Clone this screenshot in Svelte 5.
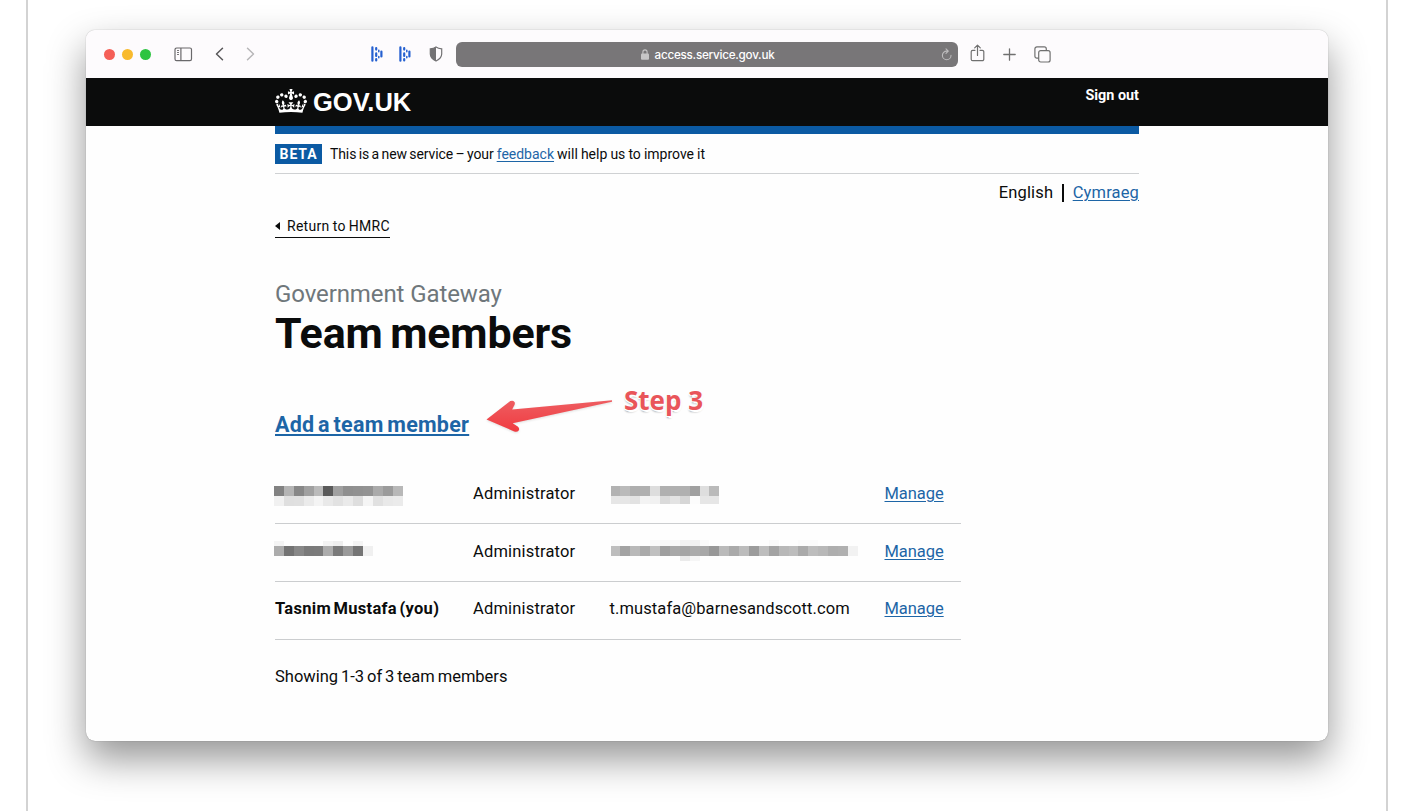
<script>
  const mosaics = {
    name1: {
      top: 6, tall: [10, 10],
      rows: [
        ['#828282', '#b4b4b4', '#878787', '#a0a0a0', '#bababa', '#5a5a5a', '#a0a0a0', '#8f8f8f', '#919191', '#939393', '#aaaaaa', '#9b9b9b', '#b8b8b8'],
        ['#f1f1f1', '#dfdfdf', '#e0e0e0', '#ebebeb', '#f4f4f4', '#e9e9e9', '#e2e2e2', '#eaeaea', '#dedede', '#f5f5f5', '#e1e1e1', '#e9e9e9', '#ebebeb']
      ]
    },
    mail1: {
      top: 3.5, tall: [10, 7.5],
      rows: [
        ['#b2b2b2', '#bababa', '#aeaeae', '#b0b0b0', '#dddddd', '#b0b0b0', '#b0b0b0', '#b0b0b0', '#a0a0a0', '#dedede', '#bababa'],
        ['#e6e6e6', '#e6e6e6', '#e2e2e2', '#f3f3f3', '#f1f1f1', '#dadada', '#e3e3e3', '#d6d6d6', '#fcfcfc', '#e6e6e6', '#e6e6e6']
      ]
    },
    name2: {
      top: -5.5, tall: [4.5, 10],
      rows: [
        ['#f4f4f4', '#fefefe', '#fefefe', '#fefefe', '#fefefe', '#f3f3f3', '#eeeeee', '#fefefe', '#f4f4f4', '#fefefe'],
        ['#acacac', '#737373', '#888888', '#7a7a7a', '#7b7b7b', '#acacac', '#7a7a7a', '#9a9a9a', '#757575', '#f0f0f0']
      ]
    },
    mail2: {
      top: -2, tall: [6, 10, 5],
      rows: [
        ['#fafafa', '#fefefe', '#fefefe', '#fefefe', '#fafafa', '#f8f8f8', '#f8f8f8', '#f1f1f1', '#f1f1f1', '#fafafa', '#fefefe', '#fefefe', '#fefefe', '#fefefe', '#fefefe', '#fefefe', '#f9f9f9', '#fefefe', '#fefefe', '#fbfbfb', '#fbfbfb', '#fefefe', '#fefefe', '#fefefe', '#fefefe'],
        ['#bdbdbd', '#a3a3a3', '#b9b9b9', '#aaaaaa', '#c0c0c0', '#9f9f9f', '#a8a8a8', '#a5a5a5', '#ababab', '#a8a8a8', '#989898', '#bababa', '#aaaaaa', '#bcbcbc', '#9c9c9c', '#bdbdbd', '#a3a3a3', '#b8b8b8', '#bdbdbd', '#aaaaaa', '#bdbdbd', '#b8b8b8', '#aeaeae', '#b0b0b0', '#f2f2f2'],
        ['#fefefe', '#fefefe', '#fefefe', '#fefefe', '#fefefe', '#fefefe', '#fefefe', '#ebebeb', '#f6f6f6', '#fefefe', '#fefefe', '#fefefe', '#fefefe', '#fefefe', '#fefefe', '#fefefe', '#fefefe', '#fefefe', '#fefefe', '#fefefe', '#fefefe', '#fefefe', '#fefefe', '#fefefe', '#fefefe']
      ]
    }
  };
  const members = [
    { nameMosaic: 'name1', mailMosaic: 'mail1' },
    { nameMosaic: 'name2', mailMosaic: 'mail2' },
    { name: 'Tasnim Mustafa (you)', mail: 't.mustafa@barnesandscott.com' }
  ];
</script>

{#snippet mosaic(m)}
  <div class="mosaic" style:margin-top="{m.top}px">
    {#each m.rows as row, i}
      <div class="pixels" style:height="{m.tall[i]}px">
        {#each row as shade}<i style:background={shade}></i>{/each}
      </div>
    {/each}
  </div>
{/snippet}

{#snippet bars()}
  <svg class="bars" width="12" height="16" viewBox="0 0 12 16" stroke="#2560d0" stroke-width="2.2" stroke-linecap="round">
    <path d="M1.400 1.300v13.400M5.200 2v1.600M5.200 7.400v2.600M5.200 13.200v1.200M10.400 5.600v4.800" /><path d="M7.800 4.200v1.600M7.800 10.400v1.400" stroke-width="1.500" />
  </svg>
{/snippet}

<div class="frame">
  <div class="window">
    <div class="toolbar">
      <div class="lights"><i class="red"></i><i class="amber"></i><i class="green"></i></div>
      <svg class="side" width="19" height="15" viewBox="0 0 19 15" fill="none" stroke="#6a696b" stroke-width="1.2">
        <rect x="1" y="1" width="16.5" height="12.6" rx="1.600" /><path d="M6.900 1v12.600" /><path d="M3 3.500h2M3 5.500h2M3 7.500h2" stroke-width=".9" />
      </svg>
      <svg class="back-i" width="9" height="14" viewBox="0 0 9 14" fill="none" stroke="#59585a" stroke-width="1.5" stroke-linecap="round" stroke-linejoin="round"><path d="M7.5 1.2 1.5 7l6 5.8" /></svg>
      <svg class="fwd-i" width="9" height="14" viewBox="0 0 9 14" fill="none" stroke="#b7b6b8" stroke-width="1.5" stroke-linecap="round" stroke-linejoin="round"><path d="m1.5 1.2 6 5.8-6 5.8" /></svg>
      <div class="ext">{@render bars()}{@render bars()}</div>
      <svg class="shield" width="14" height="16" viewBox="0 0 14 16">
        <path d="M7 1C5.300 2.200 3.300 2.700 1.300 2.900V8c0 3.300 2.700 5.500 5.700 7 3-1.500 5.700-3.700 5.700-7V2.900C10.700 2.700 8.700 2.200 7 1Z" fill="none" stroke="#737274" stroke-width="1.2" />
        <path d="M7 1C5.300 2.200 3.300 2.700 1.300 2.900V8c0 3.300 2.700 5.500 5.700 7Z" fill="#737274" />
      </svg>
      <div class="address">
        <svg width="8" height="11" viewBox="0 0 8 11"><rect y="4.600" width="8" height="6.200" rx="1" fill="#c6c5c6" /><path d="M1.900 5V3a2.100 2.100 0 0 1 4.200 0v2" fill="none" stroke="#c6c5c6" stroke-width="1.100" /></svg>
        <span>access.service.gov.uk</span>
        <svg class="reload" width="12" height="13" viewBox="0 0 12 13" fill="none" stroke="#bdbcbd" stroke-width="1.100" stroke-linecap="round" stroke-linejoin="round"><path d="M6.800 3.100H5.700a4.300 4.300 0 1 0 4.300 4.300M5 .8l2.300 2.300L5 5.400" /></svg>
      </div>
      <svg class="share" width="15" height="18" viewBox="0 0 15 18" fill="none" stroke="#707070" stroke-width="1.200" stroke-linecap="round" stroke-linejoin="round"><path d="M5 6.300H2.700a1.500 1.500 0 0 0-1.500 1.500v7.400a1.500 1.500 0 0 0 1.500 1.500h9.600a1.500 1.500 0 0 0 1.500-1.500V7.800a1.500 1.500 0 0 0-1.500-1.500H10M7.500 11.500V1.200M4.700 3.900l2.800-2.800 2.800 2.800" /></svg>
      <svg class="plus" width="13" height="13" viewBox="0 0 13 13" stroke="#707070" stroke-width="1.300" stroke-linecap="round"><path d="M6.500.8v11.400M.8 6.500h11.400" /></svg>
      <svg class="tabs" width="17" height="17" viewBox="0 0 17 17" fill="none" stroke="#707070" stroke-width="1.200"><rect x="4.700" y="4.700" width="11.400" height="11.300" rx="2" /><path d="M4.700 12.200H2.900a2 2 0 0 1-2-2V2.900a2 2 0 0 1 2-2h7.400a2 2 0 0 1 2 2v1.800" /></svg>
    </div>

    <header>
      <div class="bar">
        <svg class="crown" width="32" height="24" viewBox="0 0 132 97" preserveAspectRatio="none" fill="#fff"><path d="M25 30.2c3.5 1.5 7.7-.2 9.1-3.7 1.5-3.6-.2-7.8-3.9-9.2-3.6-1.4-7.6.3-9.1 3.9-1.4 3.5.3 7.5 3.9 9zM9 39.5c3.6 1.5 7.8-.2 9.2-3.7 1.5-3.6-.2-7.8-3.9-9.1-3.6-1.5-7.6.2-9.1 3.8-1.4 3.5.3 7.5 3.800 9zM4.400 57.200c3.500 1.500 7.700-.2 9.100-3.800 1.500-3.600-.2-7.700-3.900-9.100-3.500-1.500-7.600.3-9.100 3.800-1.400 3.500.3 7.600 3.900 9.100zm38.300-21.400c3.500 1.500 7.700-.2 9.100-3.800 1.500-3.600-.2-7.700-3.900-9.100-3.600-1.500-7.600.3-9.100 3.800-1.300 3.600.4 7.700 3.900 9.100zm64.400-5.600c-3.600 1.500-7.800-.2-9.100-3.700-1.500-3.600.2-7.800 3.800-9.200 3.600-1.400 7.700.3 9.200 3.900 1.300 3.500-.4 7.500-3.900 9zm15.900 9.300c-3.600 1.500-7.700-.2-9.100-3.700-1.500-3.600.2-7.800 3.700-9.100 3.600-1.500 7.700.2 9.200 3.800 1.500 3.500-.3 7.500-3.800 9zm4.700 17.700c-3.600 1.500-7.800-.2-9.200-3.800-1.500-3.600.2-7.700 3.900-9.100 3.600-1.500 7.700.3 9.200 3.800 1.300 3.500-.4 7.600-3.900 9.100zM89.300 35.800c-3.600 1.500-7.800-.2-9.200-3.800-1.400-3.600.2-7.700 3.900-9.100 3.600-1.500 7.700.3 9.200 3.800 1.400 3.600-.3 7.700-3.900 9.100zM69.700 17.700l8.900 4.700V9.300l-8.900 2.800c-.2-.3-.5-.6-.9-.9L72.400 0H59.600l3.500 11.200c-.3.3-.6.5-.9.9l-8.800-2.800v13.100l8.800-4.700c.3.3.6.7.9.9l-5 15.400v.1c-.2.8-.4 1.600-.4 2.400 0 4.100 3.100 7.500 7 8.100h.2c.3 0 .7.1 1 .1.4 0 .7 0 1-.1h.2c4-.6 7.100-4.100 7.100-8.100 0-.8-.1-1.700-.4-2.400V34l-5.100-15.400c.4-.2.7-.6 1-.9zM66 92.800c16.900 0 32.800 1.100 47.100 3.200 4-16.900 8.900-26.700 14-33.500l-9.600-3.400c1 4.900 1.100 7.200 0 10.200-1.500-1.400-3-4.300-4.200-8.700L108.600 76c2.800-2 5-3.200 7.500-3.300-4.400 9.400-10 11.900-13.600 11.200-4.300-.8-6.300-4.600-5.600-7.900 1-4.700 5.700-5.900 8-.5 4.300-8.700-3-11.400-7.600-8.800 7.100-7.200 7.900-13.500 2.100-21.100-8 6.100-8.100 12.300-4.500 20.800-4.700-5.400-12.100-2.500-9.500 6.200 3.400-5.200 7.900-2 7.200 3.100-.6 4.300-6.400 7.800-13.500 7.200-10.300-.9-10.900-8-11.200-13.800 2.500-.5 7.100 1.800 11 7.300L80.200 60c-4.100 4.400-8 5.300-12.300 5.400 1.400-4.400 8-11.600 8-11.600H55.500s6.400 7.200 7.900 11.600c-4.200-.1-8-1-12.300-5.400l1.400 16.400c3.900-5.500 8.500-7.700 10.900-7.300-.3 5.800-.9 12.800-11.100 13.800-7.200.6-12.900-2.900-13.500-7.200-.7-5 3.800-8.300 7.100-3.100 2.700-8.700-4.600-11.600-9.400-6.200 3.700-8.500 3.600-14.700-4.600-20.800-5.800 7.600-5 13.900 2.200 21.100-4.700-2.600-11.900.1-7.700 8.800 2.300-5.500 7.100-4.200 8.100.5.7 3.300-1.300 7.100-5.700 7.900-3.500.7-9-1.800-13.500-11.200 2.500.1 4.700 1.300 7.500 3.300l-4.700-15.400c-1.200 4.400-2.700 7.200-4.300 8.700-1.100-3-.9-5.300 0-10.200l-9.500 3.400c5 6.900 9.900 16.700 14 33.500 14.800-2.100 30.800-3.200 47.700-3.200z" /></svg>
        <span class="brand">GOV.UK</span>
        <span class="signout">Sign out</span>
      </div>
    </header>

    <div class="page">
      <div class="phase"><b>BETA</b><span><span class="lead">This is a new service – your</span> <a href="#feedback">feedback</a> will help us to improve it</span></div>
      <div class="lang"><span class="en">English</span><i></i><a href="#cy">Cymraeg</a></div>
      <div class="return"><i></i><span>Return to HMRC</span></div>
      <div class="caption">Government Gateway</div>
      <h1>Team members</h1>
      <div class="add">
        <a href="#add">Add a team member</a>
        <svg class="arrow" width="132" height="40" viewBox="0 0 132 40">
          <defs><linearGradient id="red" x1="0" y1="0" x2="0" y2="1"><stop offset="0" stop-color="#ee5d61" /><stop offset="1" stop-color="#f03b40" /></linearGradient></defs>
          <path d="M2.500 22.500 26.300 4.100q3.400-1.200 4.500 1.300.4 1.900-1 3.900l-1.600 3.200L128 3.200v1.600L28.700 26.300l5 3.200q2.300 1.800 1 4-1.500 1.800-4.500.9Z" fill="url(#red)" />
        </svg>
        <span class="step">Step 3</span>
      </div>
      <div class="table">
        {#each members as m}
          <div class="row">
            <div class="name">{#if m.name}{m.name}{:else}{@render mosaic(mosaics[m.nameMosaic])}{/if}</div>
            <div class="role">Administrator</div>
            <div class="mail">{#if m.mail}{m.mail}{:else}{@render mosaic(mosaics[m.mailMosaic])}{/if}</div>
            <a class="manage" href="#manage">Manage</a>
          </div>
        {/each}
      </div>
      <div class="count">Showing 1-3 of 3 team members</div>
    </div>
  </div>
</div>

<style>
  :global(body) { margin: 0; background: #fff; overflow: hidden; }
  * { box-sizing: border-box; }
  .frame {
    width: 1362px; height: 811px; margin-left: 26px; padding: 30px 0 0 58px;
    border: solid #d3d3d3; border-width: 0 2px; overflow: hidden;
  }
  .window {
    width: 1242px; height: 711px; border-radius: 9px; background: #fefefe; overflow: hidden;
    box-shadow: 0 0 1px rgba(0,0,0,.45), 0 18px 38px rgba(0,0,0,.42);
    font-family: Roboto, "Noto Sans", sans-serif; color: #0b0c0c; white-space: nowrap;
  }
  a { color: #1d65a6; text-decoration: underline; text-decoration-thickness: 1px; text-underline-offset: 2px; }
  svg { display: block; flex: none; }

  .toolbar { height: 48px; display: flex; align-items: center; background: #fdfbfd; padding-left: 18px; }
  .lights { display: flex; gap: 7px; }
  .lights i { width: 11px; height: 11px; border-radius: 50%; }
  .red { background: #f55f57; }
  .amber { background: #f8ba2d; }
  .green { background: #2dc440; }
  .side { margin-left: 23px; }
  .back-i { margin-left: 21.500px; }
  .fwd-i { margin-left: 22.500px; }
  .ext { display: flex; gap: 16px; margin-left: 116px; }
  .shield { margin-left: 18px; }
  .address {
    width: 502px; height: 25px; margin-left: 13px; border-radius: 6px; background: #787678; color: #fff;
    display: flex; align-items: center; justify-content: center; gap: 6px; position: relative;
    font: 500 11.700px Inter, sans-serif; padding-left: 1px;
  }
  .address span { letter-spacing: -.25px; margin-top: 2px; }
  .address .reload { position: absolute; right: 5px; top: 6px; }
  .share { margin-left: 12px; margin-top: -2px; }
  .plus { margin-left: 18px; }
  .tabs { margin-left: 18px; }

  header { background: #0b0c0c; height: 48px; padding-left: 189px; }
  .bar { width: 864px; height: 48px; display: flex; align-items: center; color: #fff; }
  .crown { margin-top: -3px; }
  .brand { font: 700 25.500px "Liberation Sans", sans-serif; letter-spacing: 0; margin-left: 6px; }
  .signout { margin-left: auto; font-weight: 700; font-size: 14.400px; line-height: 20px; letter-spacing: 0; margin-top: -12px; }

  .page { width: 864px; margin-left: 189px; }
  .phase { height: 48px; border-top: 8.500px solid #0b5aa3; border-bottom: 1px solid #cfd1d3; display: flex; align-items: center; font-size: 14px; word-spacing: -.4px; }
  .phase b { width: 47px; height: 20px; background: #0b5aa3; color: #fff; text-align: center; line-height: 20px; letter-spacing: .9px; margin-right: 8px; }
  .lead { letter-spacing: -.11px; word-spacing: -.9px; }
  .lang { height: 37px; display: flex; align-items: center; justify-content: flex-end; font-size: 16.500px; letter-spacing: .15px; }
  .lang i { width: 1.500px; height: 18px; background: #0b0c0c; margin: 0 9px; }
  .return { width: 115px; height: 23px; margin-top: 4px; padding-bottom: 1px; border-bottom: 1px solid #0b0c0c; display: flex; align-items: center; font-size: 14px; letter-spacing: .28px; word-spacing: -.6px; }
  .return i { border: solid transparent; border-width: 4px 5px 4px 0; border-right-color: #0b0c0c; margin-right: 7px; }
  .caption { margin-top: 41px; height: 30px; line-height: 30px; color: #6f777b; font-size: 24px; letter-spacing: -.1px; }
  h1 { margin: 0; height: 49px; line-height: 48px; font-size: 43px; font-weight: 700; letter-spacing: -.15px; word-spacing: -3px; }
  .add { position: relative; margin-top: 52px; height: 30px; line-height: 30px; font-size: 21.500px; font-weight: 700; letter-spacing: .25px; word-spacing: -1.900px; }
  .add a { text-decoration-thickness: 1.500px; }
  .arrow { position: absolute; left: 209px; top: -13px; filter: drop-shadow(0 1px 1px rgba(0,0,0,.12)); }
  .step {
    position: absolute; left: 348px; top: -25px; color: #e9555a; font: 700 26px/30px "Open Sans", sans-serif;
    letter-spacing: 0; word-spacing: 0; padding-left: 1px;
    text-shadow: 1.500px 1.500px 0 #fff, -1px 1px 0 #fff, 0 2px 2px rgba(0,0,0,.4);
  }
  .table { width: 686px; margin-top: 26px; font-size: 16.500px; }
  .row { height: 58px; border-bottom: 1px solid #cbcdcf; display: grid; grid-template-columns: 198px 136.500px 275px 1fr; align-items: center; padding-bottom: 3px; }
  .row:last-child { padding-bottom: 4px; }
  .name { font-weight: 700; letter-spacing: .3px; word-spacing: -1.900px; }
  .role { letter-spacing: .17px; }
  .mail { letter-spacing: .1px; }
  .manage { justify-self: start; letter-spacing: -.05px; }
  .mosaic { margin-left: -1px; }
  .mail .mosaic { margin-left: 1px; }
  .pixels { display: flex; }
  .pixels i { width: 9.900px; flex: none; }
  .count { margin-top: 25px; height: 24px; line-height: 24px; font-size: 16.500px; letter-spacing: 0; word-spacing: -1.200px; }
</style>
